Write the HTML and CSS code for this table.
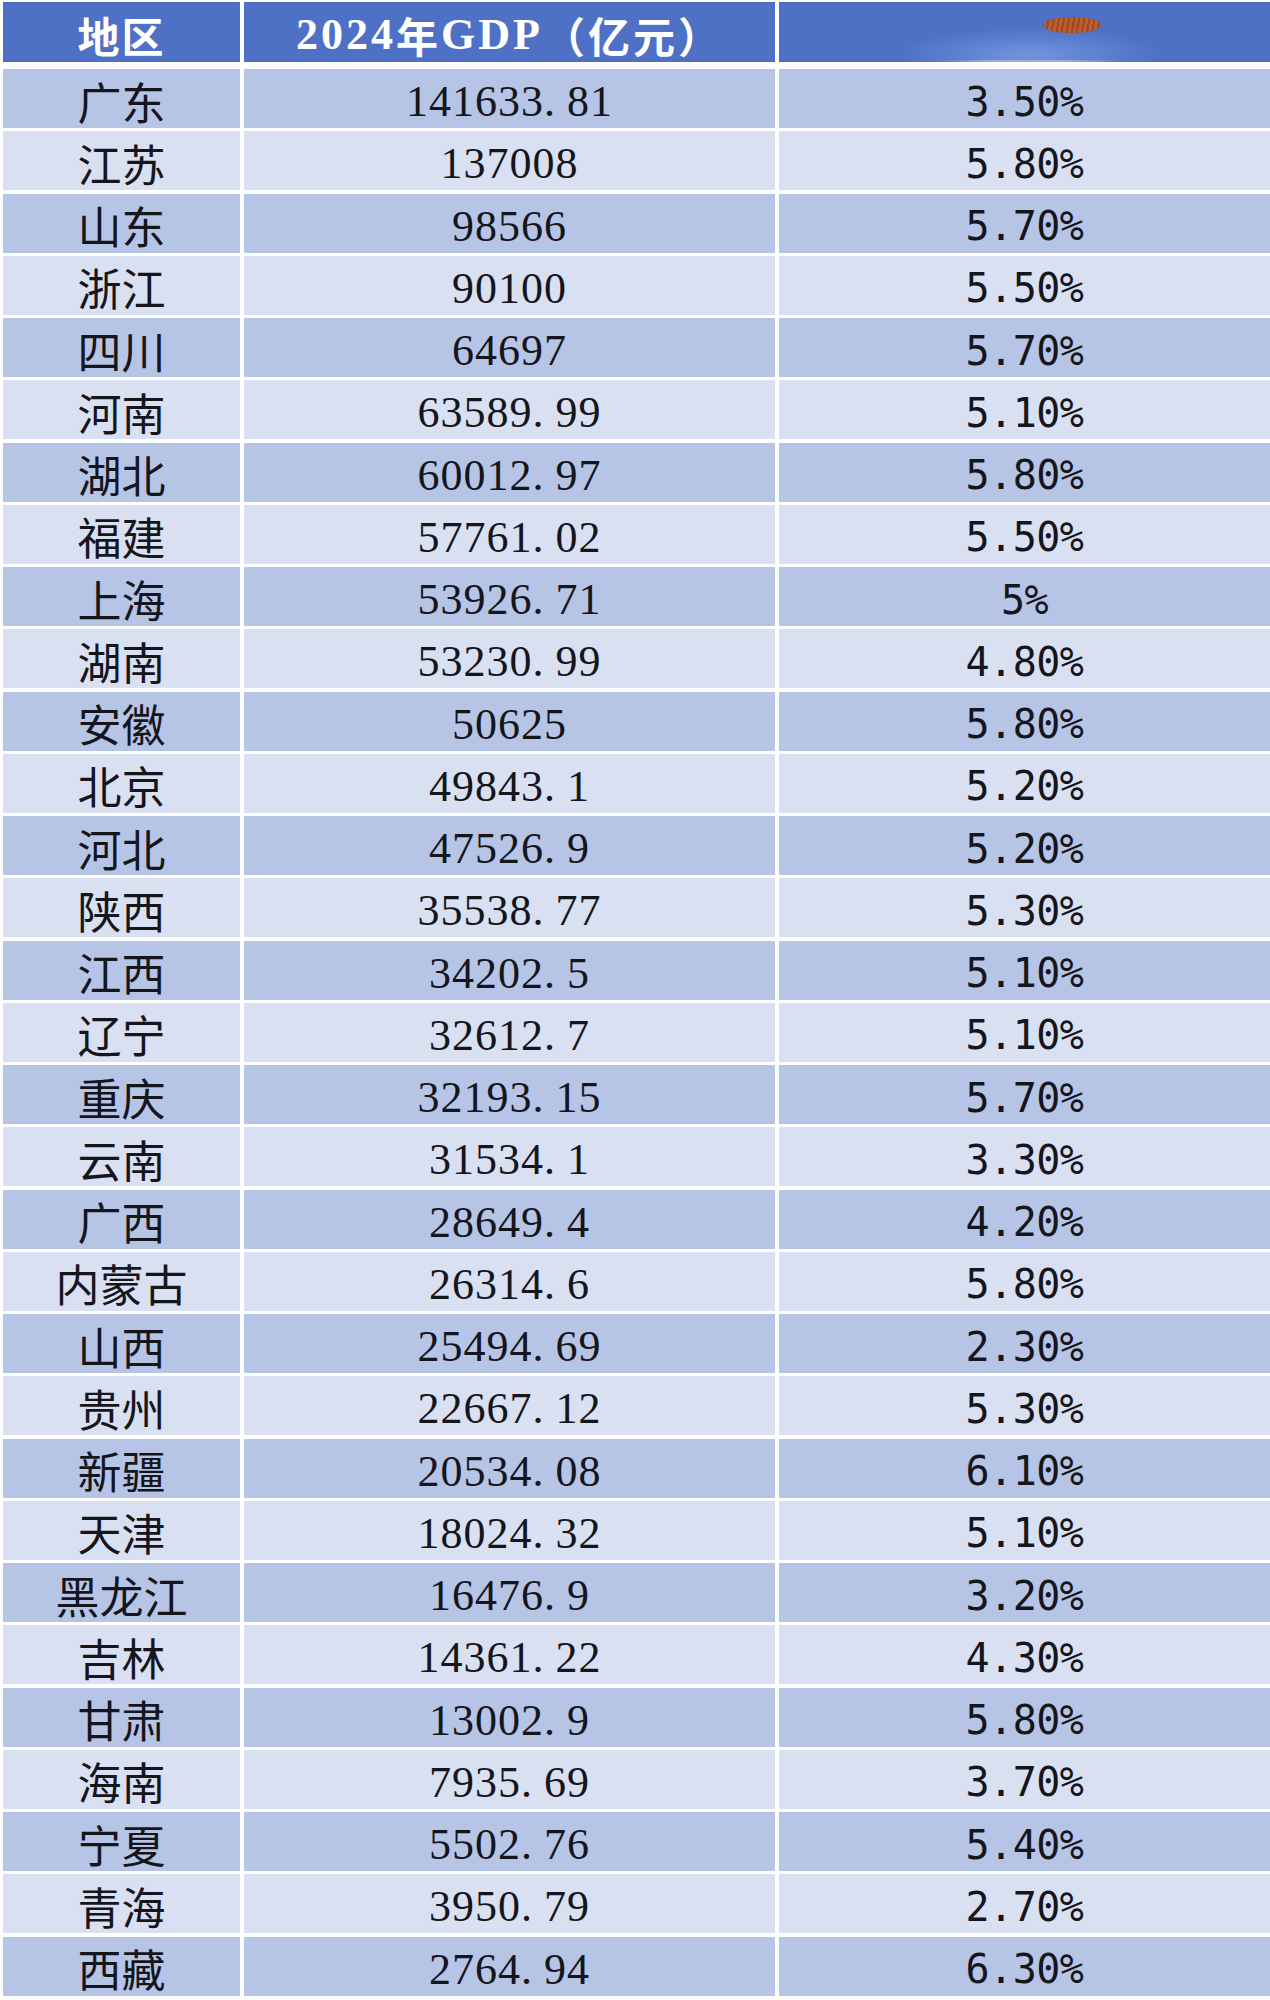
FILE: index.html
```html
<!DOCTYPE html>
<html lang="zh-CN">
<head>
<meta charset="utf-8">
<title>2024年各省GDP</title>
<link rel="stylesheet" href="styles.css">
</head>
<body>
<div class="table">
  <div class="row head">
    <div class="cell c1">地区</div>
    <div class="cell c2"><span class="lat">2024</span>年<span class="lat">GDP</span>（亿元）</div>
    <div class="cell c3"><span class="glow"></span><span class="blob"></span></div>
  </div>
  <div class="body">
    <div class="row dark"><div class="cell c1">广东</div><div class="cell c2">141633<span class="dot">.</span>81</div><div class="cell c3">3.50%</div></div>
    <div class="row light"><div class="cell c1">江苏</div><div class="cell c2">137008</div><div class="cell c3">5.80%</div></div>
    <div class="row dark"><div class="cell c1">山东</div><div class="cell c2">98566</div><div class="cell c3">5.70%</div></div>
    <div class="row light"><div class="cell c1">浙江</div><div class="cell c2">90100</div><div class="cell c3">5.50%</div></div>
    <div class="row dark"><div class="cell c1">四川</div><div class="cell c2">64697</div><div class="cell c3">5.70%</div></div>
    <div class="row light"><div class="cell c1">河南</div><div class="cell c2">63589<span class="dot">.</span>99</div><div class="cell c3">5.10%</div></div>
    <div class="row dark"><div class="cell c1">湖北</div><div class="cell c2">60012<span class="dot">.</span>97</div><div class="cell c3">5.80%</div></div>
    <div class="row light"><div class="cell c1">福建</div><div class="cell c2">57761<span class="dot">.</span>02</div><div class="cell c3">5.50%</div></div>
    <div class="row dark"><div class="cell c1">上海</div><div class="cell c2">53926<span class="dot">.</span>71</div><div class="cell c3">5%</div></div>
    <div class="row light"><div class="cell c1">湖南</div><div class="cell c2">53230<span class="dot">.</span>99</div><div class="cell c3">4.80%</div></div>
    <div class="row dark"><div class="cell c1">安徽</div><div class="cell c2">50625</div><div class="cell c3">5.80%</div></div>
    <div class="row light"><div class="cell c1">北京</div><div class="cell c2">49843<span class="dot">.</span>1</div><div class="cell c3">5.20%</div></div>
    <div class="row dark"><div class="cell c1">河北</div><div class="cell c2">47526<span class="dot">.</span>9</div><div class="cell c3">5.20%</div></div>
    <div class="row light"><div class="cell c1">陕西</div><div class="cell c2">35538<span class="dot">.</span>77</div><div class="cell c3">5.30%</div></div>
    <div class="row dark"><div class="cell c1">江西</div><div class="cell c2">34202<span class="dot">.</span>5</div><div class="cell c3">5.10%</div></div>
    <div class="row light"><div class="cell c1">辽宁</div><div class="cell c2">32612<span class="dot">.</span>7</div><div class="cell c3">5.10%</div></div>
    <div class="row dark"><div class="cell c1">重庆</div><div class="cell c2">32193<span class="dot">.</span>15</div><div class="cell c3">5.70%</div></div>
    <div class="row light"><div class="cell c1">云南</div><div class="cell c2">31534<span class="dot">.</span>1</div><div class="cell c3">3.30%</div></div>
    <div class="row dark"><div class="cell c1">广西</div><div class="cell c2">28649<span class="dot">.</span>4</div><div class="cell c3">4.20%</div></div>
    <div class="row light"><div class="cell c1">内蒙古</div><div class="cell c2">26314<span class="dot">.</span>6</div><div class="cell c3">5.80%</div></div>
    <div class="row dark"><div class="cell c1">山西</div><div class="cell c2">25494<span class="dot">.</span>69</div><div class="cell c3">2.30%</div></div>
    <div class="row light"><div class="cell c1">贵州</div><div class="cell c2">22667<span class="dot">.</span>12</div><div class="cell c3">5.30%</div></div>
    <div class="row dark"><div class="cell c1">新疆</div><div class="cell c2">20534<span class="dot">.</span>08</div><div class="cell c3">6.10%</div></div>
    <div class="row light"><div class="cell c1">天津</div><div class="cell c2">18024<span class="dot">.</span>32</div><div class="cell c3">5.10%</div></div>
    <div class="row dark"><div class="cell c1">黑龙江</div><div class="cell c2">16476<span class="dot">.</span>9</div><div class="cell c3">3.20%</div></div>
    <div class="row light"><div class="cell c1">吉林</div><div class="cell c2">14361<span class="dot">.</span>22</div><div class="cell c3">4.30%</div></div>
    <div class="row dark"><div class="cell c1">甘肃</div><div class="cell c2">13002<span class="dot">.</span>9</div><div class="cell c3">5.80%</div></div>
    <div class="row light"><div class="cell c1">海南</div><div class="cell c2">7935<span class="dot">.</span>69</div><div class="cell c3">3.70%</div></div>
    <div class="row dark"><div class="cell c1">宁夏</div><div class="cell c2">5502<span class="dot">.</span>76</div><div class="cell c3">5.40%</div></div>
    <div class="row light"><div class="cell c1">青海</div><div class="cell c2">3950<span class="dot">.</span>79</div><div class="cell c3">2.70%</div></div>
    <div class="row dark"><div class="cell c1">西藏</div><div class="cell c2">2764<span class="dot">.</span>94</div><div class="cell c3">6.30%</div></div>
  </div>
</div>
</body>
</html>
```

FILE: styles.css
```css
html, body {
  margin: 0;
  padding: 0;
  background: #ffffff;
}

.table {
  padding: 2px 0 0 3px;
  width: 1267px;
  color: #15151c;
}

.row {
  display: grid;
  grid-template-columns: 237px 531px 491px;
  column-gap: 4px;
}

.cell {
  height: 59px;
  display: flex;
  align-items: center;
  justify-content: center;
  white-space: nowrap;
  box-sizing: border-box;
  padding-top: 6px;
}

.head .cell {
  height: 60px;
  background: #4f71c5;
  color: #ffffff;
  padding-top: 4px;
}

.head {
  margin-bottom: 7px;
}

.head .c1 {
  font-family: "Noto Sans CJK SC", sans-serif;
  font-weight: 700;
  font-size: 42px;
  letter-spacing: 2px;
}

.head .c2 {
  font-family: "Noto Sans CJK SC", sans-serif;
  font-weight: 700;
  font-size: 42px;
  letter-spacing: 3px;
}

.head .c2 .lat {
  font-family: "Liberation Serif", "Noto Sans CJK SC", serif;
  font-weight: 700;
  font-size: 44px;
}

.head .c3 {
  position: relative;
  overflow: hidden;
  padding-top: 0;
}

.glow {
  position: absolute;
  left: 120px;
  top: 26px;
  width: 260px;
  height: 48px;
  border-radius: 50%;
  background: radial-gradient(ellipse at 50% 55%, rgba(140, 172, 236, 0.6) 0%, rgba(115, 148, 224, 0.35) 45%, rgba(79, 113, 197, 0) 72%);
}

.glow::after {
  content: "";
  position: absolute;
  left: 40px;
  right: 40px;
  top: 32px;
  height: 2px;
  background: linear-gradient(90deg, rgba(200, 225, 235, 0) 0%, rgba(190, 220, 225, 0.5) 30%, rgba(190, 220, 225, 0.5) 70%, rgba(200, 225, 235, 0) 100%);
}

.blob {
  position: absolute;
  left: 264px;
  top: 15px;
  width: 58px;
  height: 16px;
  border-radius: 50%;
  background:
    repeating-linear-gradient(100deg, rgba(120, 50, 20, 0.45) 0 2px, rgba(0, 0, 0, 0) 2px 5px),
    radial-gradient(ellipse at 50% 50%, #b8552a 0%, #c0602e 55%, #a9573a 80%, rgba(130, 90, 120, 0.4) 100%);
}

.body {
  display: flex;
  flex-direction: column;
  gap: 3.25px;
}

.dark .cell {
  background: #b6c4e6;
}

.light .cell {
  background: #d9e0f2;
}

.body .c1 {
  font-family: "Noto Sans CJK SC", sans-serif;
  font-size: 44px;
  font-weight: 400;
  padding-top: 4px;
}

.body .c2 {
  font-family: "Liberation Serif", serif;
  font-size: 44px;
  letter-spacing: 1px;
}

.body .c2 .dot {
  letter-spacing: 12px;
}

.body .c3 {
  font-family: "DejaVu Sans Mono", monospace;
  font-size: 40px;
  letter-spacing: -0.5px;
}
```
